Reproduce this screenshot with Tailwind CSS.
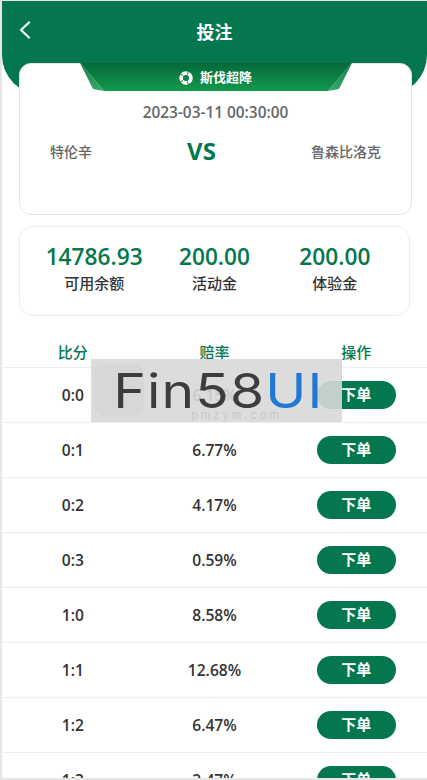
<!DOCTYPE html>
<html lang="zh-CN">
<head>
    <meta charset="utf-8"/>
    <meta content="width=device-width, initial-scale=1.0" name="viewport"/>
    <title>投注</title>
    <script src="https://cdn.jsdelivr.net/npm/@tailwindcss/browser@4"></script>
</head>
<body class="bg-white">
    <div class="relative h-[780px] overflow-hidden border-t border-b-2 border-l-2 border-[#e6e6e6] bg-white font-['Open_Sans','Noto_Sans_CJK_SC',sans-serif] text-[#333]">
        <!-- header -->
        <div class="relative h-[94px] rounded-b-[40px] bg-[#04774e]">
            <div class="flex h-[62px] items-center justify-center text-[18px] font-bold text-white">投注</div>
            <svg class="absolute left-[17px] top-[20px]" width="12" height="18" viewBox="0 0 12 18" fill="none" stroke="#fff" stroke-width="2.2" stroke-linecap="round" stroke-linejoin="round"><path d="M10 1.5 2 9l8 7.5"/></svg>
        </div>

        <!-- match card -->
        <div class="relative mr-[15px] ml-[17px] mt-[-32px] h-[152px] rounded-[12px] border border-[#e5e5e5] bg-white">
            <div class="relative mx-auto mt-[-1px] flex h-[28px] w-[272px] items-center justify-center gap-[7px] pt-[1px] text-[13px] font-bold text-white">
                <svg class="absolute inset-0" width="272" height="28" viewBox="0 0 272 28">
                    <defs>
                        <linearGradient id="ribbon" x1="0" y1="0" x2="0" y2="1">
                            <stop offset="0" stop-color="#04693b"/>
                            <stop offset="1" stop-color="#13994c"/>
                        </linearGradient>
                        <linearGradient id="fold" x1="0" y1="0" x2="0" y2="1">
                            <stop offset="0" stop-color="#0b7a45"/>
                            <stop offset="1" stop-color="#3aa96c"/>
                        </linearGradient>
                    </defs>
                    <path d="M0 0H272L248 28H24Z" fill="url(#ribbon)"/>
                    <path d="M0 0 13 26 24 28ZM272 0 259 26 248 28Z" fill="url(#fold)"/>
                </svg>
                <svg class="relative" width="14" height="14" viewBox="0 0 14 14">
                    <circle cx="7" cy="7" r="4.9" fill="none" stroke="#fff" stroke-width="3.6" stroke-dasharray="5.4 .75"/>
                    <circle cx="7" cy="7" r="2.6" fill="#0d8546"/>
                </svg>
                <span class="relative">斯伐超降</span>
            </div>
            <div class="mt-[11px] text-center text-[15.4px] leading-[21px] font-semibold text-[#666]">2023-03-11 00:30:00</div>
            <div class="mt-[11px] flex items-center justify-between px-[30px] text-[14px] font-medium text-[#666]">
                <span>特伦辛</span>
                <span class="text-[24px] leading-[34px] font-bold text-[#04774e]">VS</span>
                <span>鲁森比洛克</span>
            </div>
        </div>

        <!-- balances -->
        <div class="mx-[17px] mt-[11px] grid h-[90px] grid-cols-3 rounded-[14px] border border-[#eee] px-[14px] pt-[15px] text-center">
            <div>
                <div class="text-[22.7px] leading-[30px] font-semibold text-[#04774e]">14786.93</div>
                <div class="text-[15px] leading-[23px] font-medium">可用余额</div>
            </div>
            <div>
                <div class="text-[22.7px] leading-[30px] font-semibold text-[#04774e]">200.00</div>
                <div class="text-[15px] leading-[23px] font-medium">活动金</div>
            </div>
            <div>
                <div class="text-[22.7px] leading-[30px] font-semibold text-[#04774e]">200.00</div>
                <div class="text-[15px] leading-[23px] font-medium">体验金</div>
            </div>
        </div>

        <!-- odds table -->
        <div class="mt-[24px] grid h-[28px] grid-cols-3 items-center border-b border-[#eee] pb-[2px] text-center text-[15px] font-medium text-[#04774e]">
            <span>比分</span><span>赔率</span><span>操作</span>
        </div>
        <div class="grid h-[55px] grid-cols-3 items-center border-b border-[#eee] text-center text-[15.6px] font-semibold">
            <span class="mt-[2px]">0:0</span><span class="mt-[2px]">6.15%</span>
            <span><button class="h-[28px] w-[79px] rounded-full bg-[#04774e] pb-[2px] text-[15px] font-semibold text-white">下单</button></span>
        </div>
        <div class="grid h-[55px] grid-cols-3 items-center border-b border-[#eee] text-center text-[15.6px] font-semibold">
            <span class="mt-[2px]">0:1</span><span class="mt-[2px]">6.77%</span>
            <span><button class="h-[28px] w-[79px] rounded-full bg-[#04774e] pb-[2px] text-[15px] font-semibold text-white">下单</button></span>
        </div>
        <div class="grid h-[55px] grid-cols-3 items-center border-b border-[#eee] text-center text-[15.6px] font-semibold">
            <span class="mt-[2px]">0:2</span><span class="mt-[2px]">4.17%</span>
            <span><button class="h-[28px] w-[79px] rounded-full bg-[#04774e] pb-[2px] text-[15px] font-semibold text-white">下单</button></span>
        </div>
        <div class="grid h-[55px] grid-cols-3 items-center border-b border-[#eee] text-center text-[15.6px] font-semibold">
            <span class="mt-[2px]">0:3</span><span class="mt-[2px]">0.59%</span>
            <span><button class="h-[28px] w-[79px] rounded-full bg-[#04774e] pb-[2px] text-[15px] font-semibold text-white">下单</button></span>
        </div>
        <div class="grid h-[55px] grid-cols-3 items-center border-b border-[#eee] text-center text-[15.6px] font-semibold">
            <span class="mt-[2px]">1:0</span><span class="mt-[2px]">8.58%</span>
            <span><button class="h-[28px] w-[79px] rounded-full bg-[#04774e] pb-[2px] text-[15px] font-semibold text-white">下单</button></span>
        </div>
        <div class="grid h-[55px] grid-cols-3 items-center border-b border-[#eee] text-center text-[15.6px] font-semibold">
            <span class="mt-[2px]">1:1</span><span class="mt-[2px]">12.68%</span>
            <span><button class="h-[28px] w-[79px] rounded-full bg-[#04774e] pb-[2px] text-[15px] font-semibold text-white">下单</button></span>
        </div>
        <div class="grid h-[55px] grid-cols-3 items-center border-b border-[#eee] text-center text-[15.6px] font-semibold">
            <span class="mt-[2px]">1:2</span><span class="mt-[2px]">6.47%</span>
            <span><button class="h-[28px] w-[79px] rounded-full bg-[#04774e] pb-[2px] text-[15px] font-semibold text-white">下单</button></span>
        </div>
        <div class="grid h-[55px] grid-cols-3 items-center border-b border-[#eee] text-center text-[15.6px] font-semibold">
            <span class="mt-[2px]">1:3</span><span class="mt-[2px]">2.47%</span>
            <span><button class="h-[28px] w-[79px] rounded-full bg-[#04774e] pb-[2px] text-[15px] font-semibold text-white">下单</button></span>
        </div>

        <!-- watermark -->
        <div class="absolute top-[358px] left-[89px] flex h-[63px] w-[251px] items-center justify-center bg-[#d8d8d8]/90 font-['Inter',sans-serif] text-[48px] leading-none font-normal tracking-[1px] text-[#3c3c3c]">
            <div class="absolute top-[5px] left-[3px] h-[52px] w-[50px] rounded-[10px] bg-[#d3d3d3]/60"></div>
            <span class="relative ml-[4px] inline-block scale-x-[1.15]">Fin58<span class="text-[#1f78d1]">UI</span></span>
            <span class="absolute bottom-[0px] left-[100px] text-[11px] leading-[14px] tracking-[3px] text-[#c8c8c8]">pmzym.com</span>
        </div>
    </div>
</body>
</html>
